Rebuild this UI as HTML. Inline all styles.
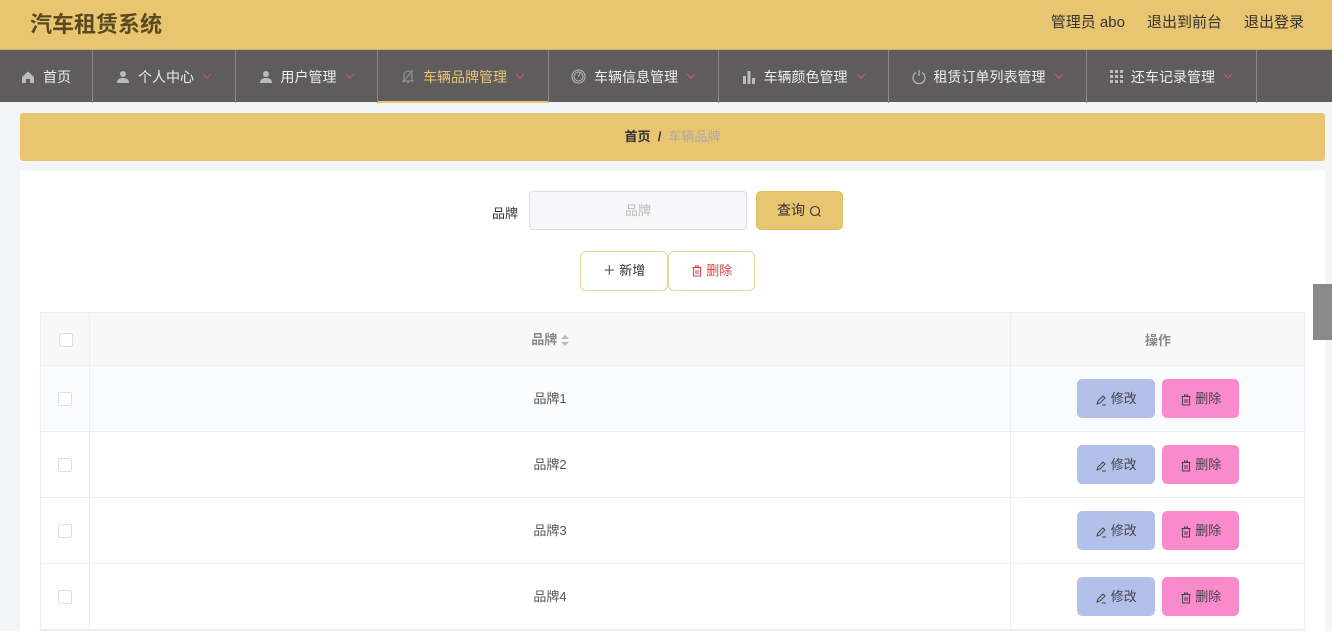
<!DOCTYPE html>
<html><head><meta charset="utf-8"><style>
*{box-sizing:border-box;margin:0;padding:0}
body{width:1332px;height:622px;overflow:hidden;background:#f4f5f9;font-family:"Liberation Sans","Noto Sans CJK SC",sans-serif;position:relative}
.hdr{position:absolute;left:0;top:0;width:1332px;height:49px;background:#e8c570}
.title{position:absolute;left:30px;top:7px;font-size:22px;font-weight:bold;color:#5a4a22}
.hr{position:absolute;right:28px;top:11px;font-size:15px;color:#333}
.hr span{margin-left:22px}
.nav{position:absolute;left:0;top:49px;width:1332px;height:53px;background:#5e5c5c;border-top:1px solid #c9b27a}
.ni{position:absolute;top:0;height:53px;border-right:1px solid #8a8888;color:#eee;font-size:14px;line-height:54px;text-align:center}
.ni svg.ar{margin-left:8px;vertical-align:middle;margin-top:-4px}
.ni.act{color:#e8c570;border-bottom:2px solid #e8c570}
.ic{display:inline-block;vertical-align:middle;margin-right:8px;margin-top:-3px}
.bc{position:absolute;left:20px;top:113px;width:1305px;height:48px;background:#e8c570;border-radius:3px;text-align:center;line-height:48px;font-size:13px}
.card{position:absolute;left:20px;top:171px;width:1305px;height:460px;background:#fff}
.lbl{position:absolute;left:492px;top:203px;font-size:13px;color:#333}
.inp{position:absolute;left:529px;top:191px;width:218px;height:39px;border:1px solid #dcdfe6;background:#f7f7f9;border-radius:4px;text-align:center;line-height:37px;color:#bbb;font-size:13px}
.btnq{position:absolute;left:756px;top:191px;width:87px;height:39px;background:#e8c570;border:1px solid #e0bd68;border-radius:5px;text-align:center;line-height:37px;font-size:14px;color:#333}
.bo{position:absolute;top:251px;height:40px;border:1px solid #e8d39a;border-radius:6px;background:#fff;text-align:center;line-height:38px;font-size:13px}
.tbl{position:absolute;left:40px;top:312px;width:1265px;border:1px solid #ebeef5}
.row{position:relative;height:66px;border-bottom:1px solid #ebeef5;font-size:13px;color:#555}
.row.h{height:53px;background:#f8f8f9;font-weight:bold;color:#888}
.c1{position:absolute;left:0;top:0;width:49px;height:100%;border-right:1px solid #ebeef5}
.cb{position:absolute;left:17px;width:14px;height:14px;border:1px solid #dcdfe6;border-radius:2px;background:#fff}
.c2{position:absolute;left:49px;top:0;width:921px;height:100%;text-align:center;border-right:1px solid #ebeef5}
.c3{position:absolute;left:970px;top:0;width:294px;height:100%;text-align:center}
.be{position:absolute;top:13px;width:78px;height:39px;border-radius:5px;line-height:39px;font-size:13px;color:#444;text-align:center}
svg{vertical-align:middle}
</style></head><body>
<svg width="0" height="0" style="position:absolute"><defs>
<symbol id="tr" viewBox="0 0 12 12"><path d="M1.5 2.5h9M4.5 2.5V1h3v1.5M2.5 2.5v8.5h7V2.5M5 5v4M7 5v4" fill="none" stroke="currentColor" stroke-width="1"/></symbol>
<symbol id="ar" viewBox="0 0 10 6"><path d="M1 1l4 4 4-4" fill="none" stroke="#c2557f" stroke-width="1.2"/></symbol>
<symbol id="pen" viewBox="0 0 12 12"><path d="M2 10l1-3 5-5 2 2-5 5-3 1zM7 11h4" fill="none" stroke="#444" stroke-width="1"/></symbol>
</defs></svg>
<div class="hdr"><div class="title">汽车租赁系统</div><div class="hr">管理员 abo<span>退出到前台</span><span>退出登录</span></div></div>
<div class="nav">
<div class="ni" style="left:0;width:93px"><svg class="ic" width="14" height="14" viewBox="0 0 14 14"><path d="M1 7L7 1.5 13 7V13H9V9H5V13H1z" fill="#bbb"/></svg>首页</div>
<div class="ni" style="left:93px;width:143px"><svg class="ic" width="14" height="14" viewBox="0 0 14 14"><circle cx="7" cy="4" r="3" fill="#bbb"/><path d="M1 13c0-4 3-5 6-5s6 1 6 5z" fill="#bbb"/></svg>个人中心<svg class="ar" width="10" height="6"><use href="#ar"/></svg></div>
<div class="ni" style="left:236px;width:142px"><svg class="ic" width="14" height="14" viewBox="0 0 14 14"><circle cx="7" cy="4" r="3" fill="#bbb"/><path d="M1 13c0-4 3-5 6-5s6 1 6 5z" fill="#bbb"/></svg>用户管理<svg class="ar" width="10" height="6"><use href="#ar"/></svg></div>
<div class="ni act" style="left:378px;width:171px"><svg class="ic" width="14" height="15" viewBox="0 0 14 15"><path d="M3 11V6a4 4 0 018 0v5l1 1H2zM6 13.5h2M2 13L12 1" fill="none" stroke="#999" stroke-width="1"/></svg>车辆品牌管理<svg class="ar" width="10" height="6"><use href="#ar"/></svg></div>
<div class="ni" style="left:549px;width:170px"><svg class="ic" width="15" height="15" viewBox="0 0 15 15"><circle cx="7.5" cy="7.5" r="6.5" fill="none" stroke="#bbb"/><circle cx="7.5" cy="7.5" r="4.5" fill="none" stroke="#bbb"/><path d="M7.5 8L9 4" stroke="#bbb"/></svg>车辆信息管理<svg class="ar" width="10" height="6"><use href="#ar"/></svg></div>
<div class="ni" style="left:719px;width:170px"><svg class="ic" width="14" height="14" viewBox="0 0 14 14"><path d="M1 6h3v8H1zM5.5 1h3v13h-3zM10 8h3v6h-3z" fill="#bbb"/></svg>车辆颜色管理<svg class="ar" width="10" height="6"><use href="#ar"/></svg></div>
<div class="ni" style="left:889px;width:198px"><svg class="ic" width="14" height="15" viewBox="0 0 14 15"><path d="M4 3.5A6 6 0 1010 3.5M7 1v6" fill="none" stroke="#bbb" stroke-width="1.2"/></svg>租赁订单列表管理<svg class="ar" width="10" height="6"><use href="#ar"/></svg></div>
<div class="ni" style="left:1087px;width:170px"><svg class="ic" width="13" height="13" viewBox="0 0 13 13"><path d="M0 0h3v3H0zM5 0h3v3H5zM10 0h3v3h-3zM0 5h3v3H0zM5 5h3v3H5zM10 5h3v3h-3zM0 10h3v3H0zM5 10h3v3H5zM10 10h3v3h-3z" fill="#bbb"/></svg>还车记录管理<svg class="ar" width="10" height="6"><use href="#ar"/></svg></div>
</div>
<div class="bc"><b style="color:#333">首页</b>&nbsp;&nbsp;<b style="color:#333">/</b>&nbsp;&nbsp;<span style="color:#aaa">车辆品牌</span></div>
<div class="card"></div>
<div class="lbl">品牌</div>
<div class="inp">品牌</div>
<div class="btnq">查询 <svg width="13" height="13" viewBox="0 0 13 13"><circle cx="6" cy="6" r="4.5" fill="none" stroke="#333" stroke-width="1.1"/><path d="M9.5 9.5l2 2" stroke="#333"/></svg></div>
<div class="bo" style="left:580px;width:88px;color:#333">＋ 新增</div>
<div class="bo" style="left:668px;width:87px;color:#e04040"><svg width="12" height="12" style="color:#e04040;margin-top:-2px"><use href="#tr"/></svg> 删除</div>
<div class="tbl">
<div class="row h"><div class="c1"><div class="cb" style="top:20px;left:18px"></div></div><div class="c2" style="line-height:53px">品牌 <svg width="8" height="11" viewBox="0 0 8 11"><path d="M0 4l4-4 4 4zM0 7l4 4 4-4z" fill="#bbb"/></svg></div><div class="c3" style="line-height:55px">操作</div></div>
<div class="row" style="background:#fafbfd"><div class="c1"><div class="cb" style="top:26px"></div></div><div class="c2" style="line-height:66px">品牌1</div><div class="c3"><div class="be" style="left:66px;background:#b3c0ea"><svg width="12" height="12"><use href="#pen"/></svg> 修改</div><div class="be" style="left:151px;width:77px;background:#f98bcd"><svg width="12" height="12" style="color:#444"><use href="#tr"/></svg> 删除</div></div></div>
<div class="row"><div class="c1"><div class="cb" style="top:26px"></div></div><div class="c2" style="line-height:66px">品牌2</div><div class="c3"><div class="be" style="left:66px;background:#b3c0ea"><svg width="12" height="12"><use href="#pen"/></svg> 修改</div><div class="be" style="left:151px;width:77px;background:#f98bcd"><svg width="12" height="12" style="color:#444"><use href="#tr"/></svg> 删除</div></div></div>
<div class="row"><div class="c1"><div class="cb" style="top:26px"></div></div><div class="c2" style="line-height:66px">品牌3</div><div class="c3"><div class="be" style="left:66px;background:#b3c0ea"><svg width="12" height="12"><use href="#pen"/></svg> 修改</div><div class="be" style="left:151px;width:77px;background:#f98bcd"><svg width="12" height="12" style="color:#444"><use href="#tr"/></svg> 删除</div></div></div>
<div class="row"><div class="c1"><div class="cb" style="top:26px"></div></div><div class="c2" style="line-height:66px">品牌4</div><div class="c3"><div class="be" style="left:66px;background:#b3c0ea"><svg width="12" height="12"><use href="#pen"/></svg> 修改</div><div class="be" style="left:151px;width:77px;background:#f98bcd"><svg width="12" height="12" style="color:#444"><use href="#tr"/></svg> 删除</div></div></div>
</div>
<div style="position:absolute;left:1313px;top:284px;width:19px;height:56px;background:#8a8a8a"></div>
</body></html>
